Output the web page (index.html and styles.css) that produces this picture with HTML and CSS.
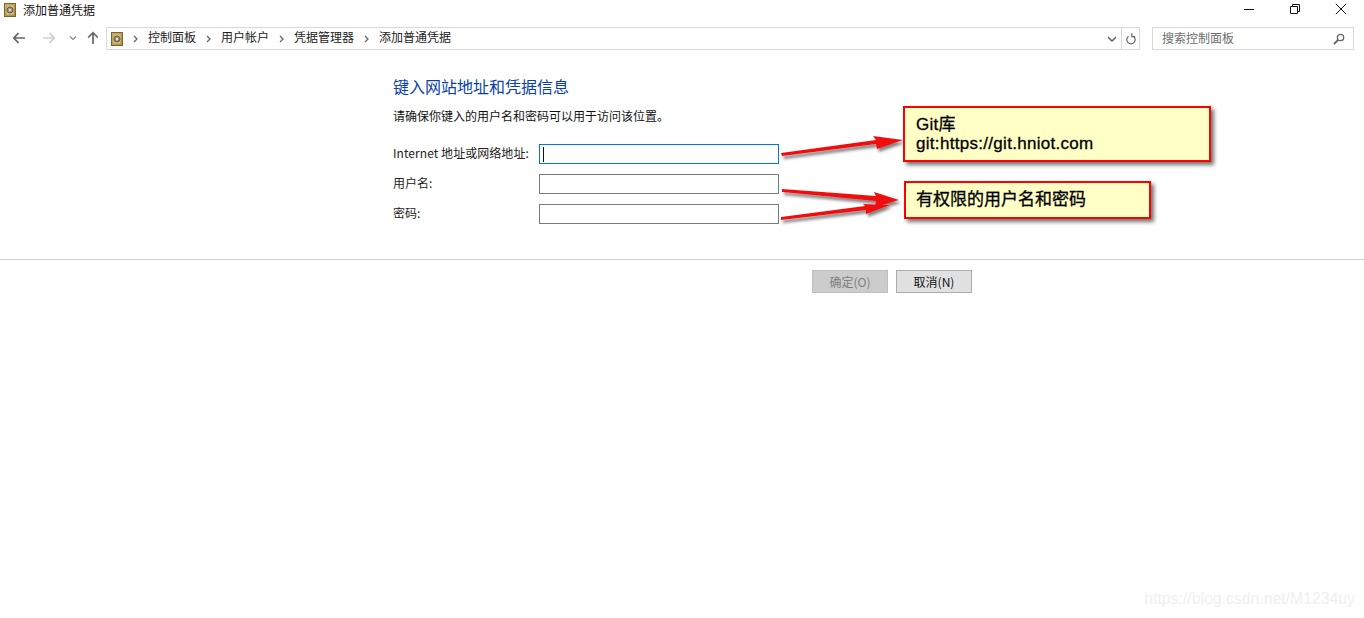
FILE: index.html
```html
<!DOCTYPE html>
<html lang="zh-CN">
<head>
<meta charset="utf-8">
<title>添加普通凭据</title>
<link rel="stylesheet" href="styles.css">
</head>
<body>
<svg width="0" height="0" class="defs"><defs>
<linearGradient id="gold" x1="0" y1="0" x2="1" y2="1"><stop offset="0" stop-color="#e0c47a"/><stop offset="1" stop-color="#a9853a"/></linearGradient>
<symbol id="safe" viewBox="0 0 12 14">
<rect x="0.500" y="0.500" width="11" height="13" fill="url(#gold)" stroke="#7d6427"/>
<rect x="2" y="2" width="8" height="10" fill="#d6bf84" stroke="#a58a44" stroke-width=".6"/>
<circle cx="6" cy="7" r="3" fill="#9a937c" stroke="#5c5540" stroke-width=".9"/>
<circle cx="6" cy="7" r="1.200" fill="#e6e0cc"/>
</symbol>
</defs></svg>

<header class="titlebar">
  <svg class="app-icon"><use href="#safe"/></svg>
  <span class="title">添加普通凭据</span>
  <div class="winctl">
    <svg class="winbtn" viewBox="0 0 12 12"><path d="M1 6.500h10" stroke="#111" fill="none"/></svg>
    <svg class="winbtn" viewBox="0 0 12 12"><path d="M1.500 3.500h7v7h-7zM3.500 3.500v-2h7v7h-2" stroke="#111" fill="none"/></svg>
    <svg class="winbtn" viewBox="0 0 12 12"><path d="M.8.8l10.400 10.400M11.200.8L.8 11.200" stroke="#111" fill="none"/></svg>
  </div>
</header>

<nav class="navbar">
  <div class="navbtns">
    <svg class="nav nav-back" viewBox="0 0 14 12"><path d="M13 6H2M6.500 1.200L1.800 6l4.700 4.800" stroke="#666" stroke-width="1.700" fill="none"/></svg>
    <svg class="nav nav-fwd" viewBox="0 0 14 12"><path d="M1 6h11M7.500 1.200L12.200 6l-4.700 4.800" stroke="#cfcfcf" stroke-width="1.700" fill="none"/></svg>
    <svg class="nav nav-down" viewBox="0 0 8 6"><path d="M1 1.500l3 3 3-3" stroke="#888" stroke-width="1.200" fill="none"/></svg>
    <svg class="nav nav-up" viewBox="0 0 12 14"><path d="M6 13V2M1.200 6.500L6 1.800l4.800 4.700" stroke="#666" stroke-width="1.700" fill="none"/></svg>
  </div>
  <div class="address">
    <svg class="addr-icon"><use href="#safe"/></svg>
    <svg class="crumb-sep first" viewBox="0 0 5 8"><path d="M1 1l3 3-3 3" stroke="#666" stroke-width="1.300" fill="none"/></svg><span class="crumb">控制面板</span>
    <svg class="crumb-sep" viewBox="0 0 5 8"><path d="M1 1l3 3-3 3" stroke="#666" stroke-width="1.300" fill="none"/></svg><span class="crumb">用户帐户</span>
    <svg class="crumb-sep" viewBox="0 0 5 8"><path d="M1 1l3 3-3 3" stroke="#666" stroke-width="1.300" fill="none"/></svg><span class="crumb">凭据管理器</span>
    <svg class="crumb-sep" viewBox="0 0 5 8"><path d="M1 1l3 3-3 3" stroke="#666" stroke-width="1.300" fill="none"/></svg><span class="crumb">添加普通凭据</span>
    <svg class="addr-drop" viewBox="0 0 10 6"><path d="M1 1l4 4 4-4" stroke="#555" stroke-width="1.300" fill="none"/></svg>
    <span class="addr-refresh">
      <svg viewBox="0 0 12 14" class="refresh"><path d="M3.600 4.200a4.200 4.200 0 1 0 4.800 0M6.800 1.200v3.400h3.400" stroke="#666" stroke-width="1.200" fill="none"/></svg>
    </span>
  </div>
  <div class="search">
    <span class="search-text">搜索控制面板</span>
    <svg class="search-icon" viewBox="0 0 12 12"><circle cx="7.500" cy="4.500" r="3.200" stroke="#666" stroke-width="1.300" fill="none"/><path d="M5 7L1 11" stroke="#666" stroke-width="1.800"/></svg>
  </div>
</nav>

<main class="content">
  <h1 class="heading">键入网站地址和凭据信息</h1>
  <p class="intro">请确保你键入的用户名和密码可以用于访问该位置。</p>
  <div class="form">
    <label class="field-label field-label-wide">Internet 地址或网络地址:</label>
    <div class="input focused"><span class="caret"></span></div>
    <label class="field-label">用户名:</label>
    <div class="input"></div>
    <label class="field-label">密码:</label>
    <div class="input"></div>
  </div>
</main>

<footer class="actions">
  <button class="btn disabled" type="button">确定(O)</button>
  <button class="btn" type="button">取消(N)</button>
</footer>

<svg class="arrows" viewBox="0 0 1364 618">
  <defs><filter id="ashadow" x="-10%" y="-50%" width="120%" height="200%"><feDropShadow dx="2" dy="3" stdDeviation="1.500" flood-color="#000" flood-opacity=".5"/></filter></defs>
  <g fill="#f01010" filter="url(#ashadow)">
    <polygon points="781,153 876,140 873,136 903,140 877,149 876,144 782,156"/>
    <polygon points="782,189 876,196 874,192 899,200 875,207 876,201 782,192"/>
    <polygon points="781,217 865,206 863,204 890,205 866,214 866,210 781,220"/>
  </g>
</svg>

<div class="callout callout-git">Git库<br>git:https://git.hniot.com</div>
<div class="callout callout-user">有权限的用户名和密码</div>

<div class="watermark">https://blog.csdn.net/M1234uy</div>
</body>
</html>
```

FILE: styles.css
```css
* { box-sizing: border-box; }
html, body { margin: 0; padding: 0; }
body {
  width: 1364px;
  height: 618px;
  overflow: hidden;
  position: relative;
  background: #fff;
  color: #111;
  font-family: "Noto Sans CJK SC", "Liberation Sans", sans-serif;
  font-size: 12px;
}
.defs { position: absolute; }

.titlebar { display: flex; align-items: center; height: 20px; padding-left: 4px; }
.app-icon { width: 12px; height: 14px; }
.title { margin-left: 7px; font-size: 12px; line-height: 20px; }
.winctl { margin-left: auto; display: flex; gap: 34px; padding-right: 17px; margin-top: -3px; }
.winbtn { width: 12px; height: 12px; }

.navbar { display: flex; height: 22px; margin-top: 7px; padding-left: 12px; }
.navbtns { display: flex; align-items: center; width: 94px; }
.nav { display: block; }
.nav-back { width: 14px; height: 12px; }
.nav-fwd { width: 14px; height: 12px; margin-left: 16px; }
.nav-down { width: 8px; height: 6px; margin-left: 13px; }
.nav-up { width: 12px; height: 14px; margin-left: 10px; }

.address {
  display: flex; align-items: center;
  width: 1034px; height: 23px;
  border: 1px solid #d9d9d9;
  padding-left: 4px;
}
.addr-icon { width: 12px; height: 14px; }
.crumb { font-size: 12px; color: #222; line-height: 18px; margin-top: -3px; }
.crumb-sep { width: 5px; height: 8px; margin: 0 10px; }
.crumb-sep.first { margin: 0 10px 0 10px; }
.addr-drop { width: 10px; height: 6px; margin-left: auto; margin-right: 4px; }
.addr-refresh {
  width: 18px; height: 21px; border-left: 1px solid #d9d9d9;
  display: flex; align-items: center; justify-content: center;
}
.refresh { width: 12px; height: 14px; }

.search {
  display: flex; align-items: center; justify-content: space-between;
  width: 202px; height: 23px; margin-left: 12px;
  border: 1px solid #d9d9d9; padding: 0 8px 0 9px;
}
.search-text { color: #6d6d6d; font-size: 12px; line-height: 18px; margin-top: -2px; }
.search-icon { width: 12px; height: 12px; }

.content { padding: 26px 0 0 393px; }
.heading { margin: 0; font-size: 16px; font-weight: 400; line-height: 22px; color: #0a3fa8; }
.intro { margin: 9px 0 0; font-size: 12px; line-height: 20px; color: #111; }
.form {
  display: grid;
  grid-template-columns: 146px 240px;
  grid-auto-rows: 20px;
  row-gap: 10px;
  margin-top: 18px;
  align-items: center;
}
.field-label { font-size: 12px; line-height: 18px; color: #222; white-space: nowrap; margin-top: -2px; }
.field-label-wide { letter-spacing: .06px; }
.input { height: 20px; border: 1px solid #7a7a7a; background: #fff; position: relative; padding: 2px 3px; }
.input.focused { border-color: #0078d7; }
.caret { display: block; width: 1px; height: 15px; background: #111; }

.actions {
  display: flex; justify-content: flex-start; gap: 8px;
  margin-top: 35px; padding: 10px 0 0 812px;
  border-top: 1px solid #d0d0d0;
}
.btn {
  width: 76px; height: 23px; padding: 0;
  border: 1px solid #adadad; background: #e1e1e1;
  font-family: inherit; font-size: 12px; line-height: 20px; color: #111;
}
.btn.disabled { background: #cccccc; border-color: #bfbfbf; color: #7f7f7f; }

.arrows { position: absolute; left: 0; top: 0; width: 1364px; height: 618px; pointer-events: none; }

.callout {
  position: absolute;
  border: 2px solid #ff0000;
  background: #ffffc6;
  box-shadow: 3px 3px 4px rgba(0, 0, 0, .55);
  color: #000;
  font-family: "Liberation Sans", "Noto Sans CJK SC", sans-serif;
  font-size: 17px;
  padding-left: 11px;
  -webkit-text-stroke: .3px #000;
}
.callout-git { left: 903px; top: 106px; width: 308px; height: 56px; line-height: 19px; padding-top: 7px; letter-spacing: .3px; }
.callout-user { left: 904px; top: 181px; width: 247px; height: 38px; line-height: 33px; padding-left: 10px; }

.watermark {
  position: absolute; right: 9px; top: 590px;
  font-family: "Liberation Sans", sans-serif;
  font-size: 15.800px; color: #f0f0f0;
}
```
